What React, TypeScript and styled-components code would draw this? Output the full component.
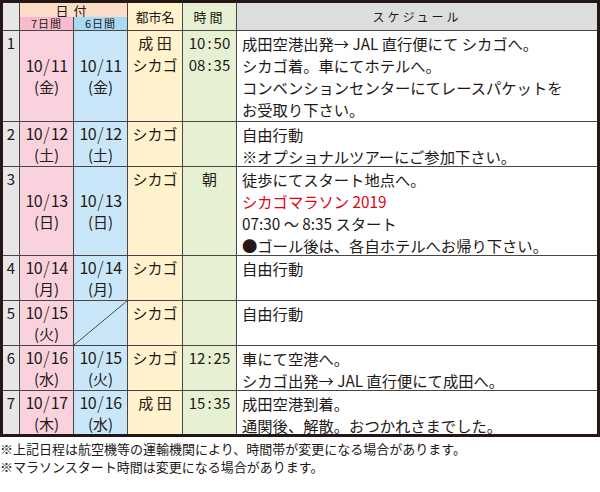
import React from 'react'
import styled, { createGlobalStyle } from 'styled-components'

const GlobalStyle = createGlobalStyle`
  * { box-sizing: border-box; }
  body {
    margin: 0;
    background: #ffffff;
    color: #231815;
    font-family: 'Noto Sans CJK JP', 'Noto Sans', sans-serif;
  }
`

type Row = {
  no: string
  d7: [string, string, string]
  d6: [string, string, string] | null
  city: string[]
  time: string[]
  schedule: { text: string; red?: boolean }[]
  height: number
}

const rows: Row[] = [
  {
    no: '1',
    d7: ['10', '11', '金'],
    d6: ['10', '11', '金'],
    city: ['成 田', 'シカゴ'],
    time: ['10:50', '08:35'],
    schedule: [
      { text: '成田空港出発→ JAL 直行便にて シカゴへ。' },
      { text: 'シカゴ着。車にてホテルへ。' },
      { text: 'コンベンションセンターにてレースパケットを' },
      { text: 'お受取り下さい。' },
    ],
    height: 91,
  },
  {
    no: '2',
    d7: ['10', '12', '土'],
    d6: ['10', '12', '土'],
    city: ['シカゴ'],
    time: [],
    schedule: [{ text: '自由行動' }, { text: '※オプショナルツアーにご参加下さい。' }],
    height: 45,
  },
  {
    no: '3',
    d7: ['10', '13', '日'],
    d6: ['10', '13', '日'],
    city: ['シカゴ'],
    time: ['朝'],
    schedule: [
      { text: '徒歩にてスタート地点へ。' },
      { text: 'シカゴマラソン 2019', red: true },
      { text: '07:30 〜 8:35 スタート' },
      { text: '●ゴール後は、各自ホテルへお帰り下さい。' },
    ],
    height: 89,
  },
  {
    no: '4',
    d7: ['10', '14', '月'],
    d6: ['10', '14', '月'],
    city: ['シカゴ'],
    time: [],
    schedule: [{ text: '自由行動' }],
    height: 45,
  },
  {
    no: '5',
    d7: ['10', '15', '火'],
    d6: null,
    city: ['シカゴ'],
    time: [],
    schedule: [{ text: '自由行動' }],
    height: 45,
  },
  {
    no: '6',
    d7: ['10', '16', '水'],
    d6: ['10', '15', '火'],
    city: ['シカゴ'],
    time: ['12:25'],
    schedule: [{ text: '車にて空港へ。' }, { text: 'シカゴ出発→ JAL 直行便にて成田へ。' }],
    height: 45,
  },
  {
    no: '7',
    d7: ['10', '17', '木'],
    d6: ['10', '16', '水'],
    city: ['成 田'],
    time: ['15:35'],
    schedule: [{ text: '成田空港到着。' }, { text: '通関後、解散。おつかれさまでした。' }],
    height: 43,
  },
]

const LINE = '#4a4544'

const Page = styled.div`
  width: 600px;
  height: 492px;
  overflow: hidden;
`

const Table = styled.div<{ $rows: string }>`
  display: grid;
  width: 600px;
  border: 3px solid #231815;
  grid-template-columns: 17px 54px 54px 55px 54px 1fr;
  grid-template-rows: ${(p) => p.$rows};
`

const Cell = styled.div<{ $bg: string; $lastCol?: boolean; $lastRow?: boolean }>`
  background: ${(p) => p.$bg};
  border-right: ${(p) => (p.$lastCol ? 'none' : `1px solid ${LINE}`)};
  border-bottom: ${(p) => (p.$lastRow ? 'none' : `1px solid ${LINE}`)};
  min-width: 0;
  overflow: hidden;
`

const HeaderCell = styled(Cell)<{ $col: string; $row: string; $size?: number; $spacing?: number }>`
  grid-column: ${(p) => p.$col};
  grid-row: ${(p) => p.$row};
  display: flex;
  align-items: center;
  justify-content: center;
  overflow: visible;
  font-size: ${(p) => p.$size ?? 13}px;
  letter-spacing: ${(p) => p.$spacing ?? 0}px;
  line-height: 1;
`

const TopHeaderCell = styled(HeaderCell)`
  border-bottom: none;
`

const NumCell = styled(Cell)`
  font-size: 15px;
  line-height: 22px;
  text-align: center;
  padding-top: 1px;
`

const DateCell = styled(Cell)`
  display: flex;
  flex-direction: column;
  align-items: center;
  justify-content: center;
  overflow: visible;
  line-height: 22px;
`

const EmptyDateCell = styled(Cell)`
  background-image: linear-gradient(
    to bottom right,
    transparent calc(50% - 0.7px),
    #3e3a39 50%,
    transparent calc(50% + 0.7px)
  );
`

const DateText = styled.div`
  font-size: 16px;
  letter-spacing: -0.6px;
  white-space: nowrap;
`

const Slash = styled.span`
  display: inline-block;
  margin: 0 2px 0 1px;
  font-weight: 300;
  transform: scaleY(1.1);
`

const DayText = styled.div`
  font-size: 15px;
`

const CityCell = styled(Cell)`
  font-size: 15px;
  line-height: 22px;
  text-align: center;
  padding-top: 1px;
  white-space: pre;
`

const TimeCell = styled(Cell)`
  font-size: 15px;
  line-height: 22px;
  text-align: center;
  padding-top: 1px;
  white-space: nowrap;
`

const Colon = styled.span`
  margin: 0 2px;
`

const ScheduleCell = styled(Cell)`
  padding: 1px 0 0 5px;
  font-size: 15.3px;
  line-height: 22px;
  overflow: visible;
`

const ScheduleLine = styled.div<{ $red?: boolean }>`
  color: ${(p) => (p.$red ? '#e60012' : '#231815')};
  white-space: nowrap;
`

const Notes = styled.div`
  margin-top: 3px;
  font-size: 13px;
  line-height: 18px;
`

const C = {
  num: '#e6e6e6',
  pink: '#f9d2de',
  blue: '#c9e7f9',
  yellow: '#fff2cd',
  green: '#e6f0d3',
  peach: '#fbdcc6',
  pinkHead: '#f6bccd',
  blueHead: '#a8daf3',
  gray: '#dcdddd',
}

const TimeValue = ({ value }: { value: string }) => {
  const parts = value.split(':')
  if (parts.length < 2) return <>{value}</>
  return (
    <>
      {parts[0]}
      <Colon>:</Colon>
      {parts[1]}
    </>
  )
}

const DateValue = ({ d }: { d: [string, string, string] }) => (
  <>
    <DateText>
      {d[0]}
      <Slash>/</Slash>
      {d[1]}
    </DateText>
    <DayText>({d[2]})</DayText>
  </>
)

const App = () => {
  const rowTracks = ['14px', '14px', ...rows.map((r) => `${r.height}px`)].join(' ')
  return (
    <Page>
      <GlobalStyle />
      <Table $rows={rowTracks}>
        <HeaderCell $bg={C.num} $col="1" $row="1 / 3" />
        <TopHeaderCell $bg={C.peach} $col="2 / 4" $row="1" $size={13} $spacing={5}>
          日付
        </TopHeaderCell>
        <HeaderCell $bg={C.yellow} $col="4" $row="1 / 3" $size={13}>
          都市名
        </HeaderCell>
        <HeaderCell $bg={C.green} $col="5" $row="1 / 3" $size={13} $spacing={3}>
          時間
        </HeaderCell>
        <HeaderCell $bg={C.gray} $col="6" $row="1 / 3" $lastCol $size={12} $spacing={3}>
          スケジュール
        </HeaderCell>
        <HeaderCell $bg={C.pinkHead} $col="2" $row="2" $size={11} $spacing={1}>
          7日間
        </HeaderCell>
        <HeaderCell $bg={C.blueHead} $col="3" $row="2" $size={11} $spacing={1}>
          6日間
        </HeaderCell>

        {rows.map((r, i) => {
          const last = i === rows.length - 1
          return (
            <React.Fragment key={r.no}>
              <NumCell $bg={C.num} $lastRow={last}>
                {r.no}
              </NumCell>
              <DateCell $bg={C.pink} $lastRow={last}>
                <DateValue d={r.d7} />
              </DateCell>
              {r.d6 ? (
                <DateCell $bg={C.blue} $lastRow={last}>
                  <DateValue d={r.d6} />
                </DateCell>
              ) : (
                <EmptyDateCell $bg={C.blue} $lastRow={last} />
              )}
              <CityCell $bg={C.yellow} $lastRow={last}>
                {r.city.map((c) => (
                  <div key={c}>{c}</div>
                ))}
              </CityCell>
              <TimeCell $bg={C.green} $lastRow={last}>
                {r.time.map((t) => (
                  <div key={t}>
                    <TimeValue value={t} />
                  </div>
                ))}
              </TimeCell>
              <ScheduleCell $bg="#ffffff" $lastCol $lastRow={last}>
                {r.schedule.map((s) => (
                  <ScheduleLine key={s.text} $red={s.red}>
                    {s.text}
                  </ScheduleLine>
                ))}
              </ScheduleCell>
            </React.Fragment>
          )
        })}
      </Table>
      <Notes>
        <div>※上記日程は航空機等の運輸機関により、時間帯が変更になる場合があります。</div>
        <div>※マラソンスタート時間は変更になる場合があります。</div>
      </Notes>
    </Page>
  )
}

export default App
